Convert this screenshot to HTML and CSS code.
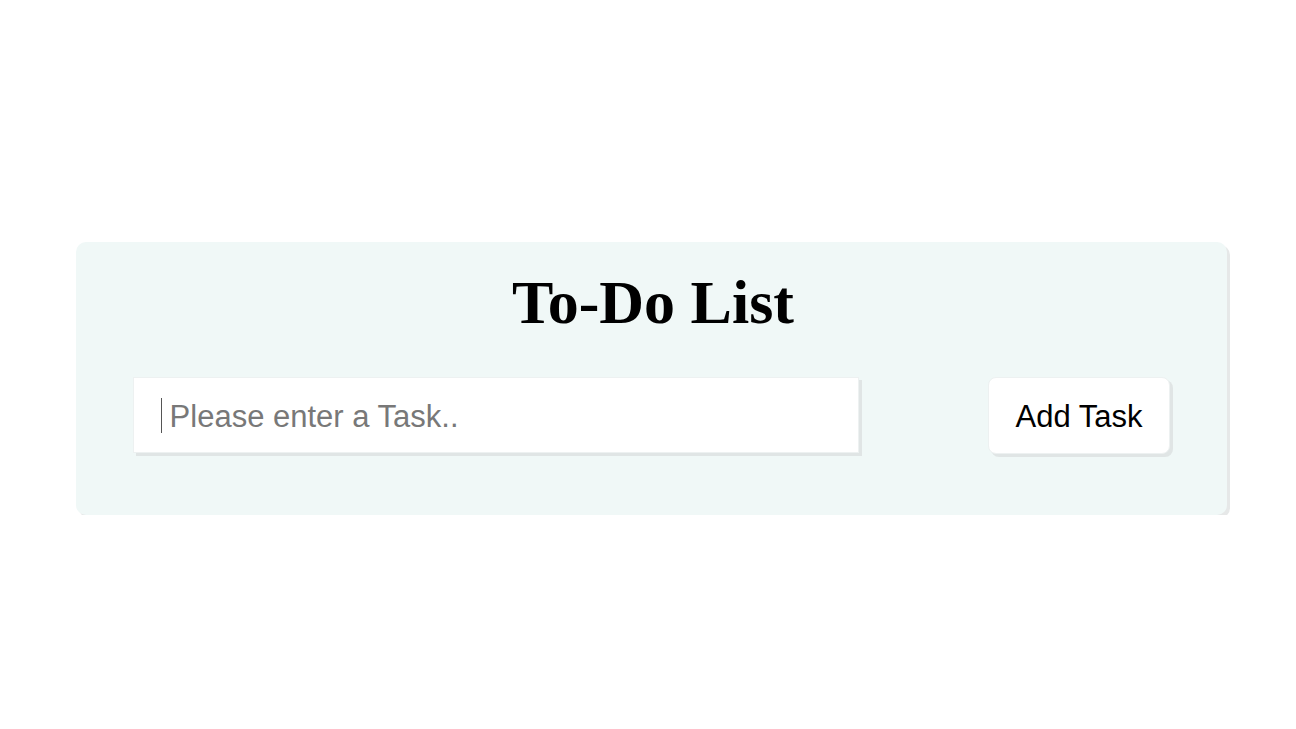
FILE: index.html
```html
<!DOCTYPE html>
<html lang="en">
<head>
<meta charset="utf-8">
<title>To-Do List</title>
<link rel="stylesheet" href="styles.css">
</head>
<body>
<main class="card">
  <h1 class="title">To-Do List</h1>
  <div class="row">
    <div class="input-wrap">
      <input class="task-input" type="text" placeholder=" Please enter a Task..">
      <span class="caret"></span>
    </div>
    <button class="add-btn" type="button">Add Task</button>
  </div>
</main>
</body>
</html>
```

FILE: styles.css
```css
html, body {
  margin: 0;
  padding: 0;
  background: #ffffff;
}

body {
  padding: 242px 0 0 76px;
  font-family: "Liberation Sans", Arial, sans-serif;
}

.card {
  width: 1151px;
  box-sizing: border-box;
  background: #f0f8f7;
  border-radius: 10px;
  box-shadow: 3px 3px 0 #e6e8e8;
  padding: 26px 57px 61px 57px;
}

.title {
  margin: 0;
  padding-left: 3px;
  font-family: "Liberation Serif", "Times New Roman", serif;
  font-weight: bold;
  font-size: 62px;
  line-height: 69px;
  text-align: center;
  color: #000;
}

.row {
  margin-top: 40px;
  display: flex;
  justify-content: space-between;
  align-items: flex-start;
}

.input-wrap {
  position: relative;
  display: flex;
}

.task-input {
  width: 726px;
  height: 76px;
  box-sizing: border-box;
  border: 1px solid #edf1f1;
  box-shadow: 3px 3px 0 #e0e5e5;
  background: #fff;
  padding: 4px 0 0 27px;
  font-family: "Liberation Sans", Arial, sans-serif;
  font-size: 31px;
  color: #333;
  outline: none;
}

.task-input::placeholder {
  color: #787878;
}

.caret {
  position: absolute;
  left: 28px;
  top: 21px;
  width: 1px;
  height: 35px;
  background: #555;
}

.add-btn {
  width: 182px;
  height: 77px;
  box-sizing: border-box;
  border: 1px solid #edf1f1;
  border-radius: 8px;
  box-shadow: 3px 3px 0 #e0e5e5;
  background: #fff;
  font-family: "Liberation Sans", Arial, sans-serif;
  font-size: 31px;
  color: #000;
  padding: 3px 0 0 0;
  cursor: pointer;
}
```
